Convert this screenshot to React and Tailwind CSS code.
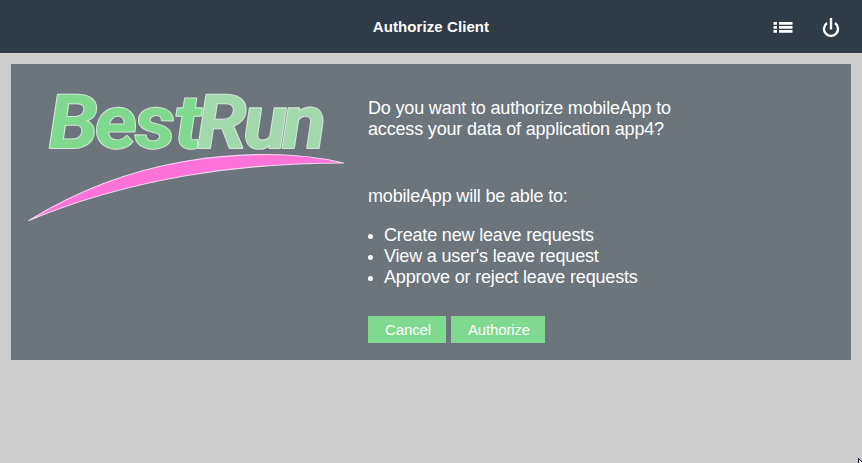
const permissions = [
  'Create new leave requests',
  "View a user's leave request",
  'Approve or reject leave requests',
];

function Logo() {
  return (
    <svg width="357" height="296" viewBox="11 64 357 296" className="shrink-0" role="img" aria-label="BestRun">
      <g
        className="font-['Roboto','Liberation_Sans',sans-serif] font-bold italic"
        fontSize="75"
        stroke="#d3e6d7"
        strokeWidth="2"
        strokeLinejoin="round"
        paintOrder="stroke"
        transform="translate(49 148) skewX(2) scale(1.08 1)"
      >
        <text x="0 43 80 117" y="0" fill="#7fd98e">Best</text>
        <text x="137.500 180.500 216.500" y="0" fill="#a1d8ac">Run</text>
      </g>
      <path
        d="M29 220.500C78 190 133 170 187 161C235 153 295 151 343.500 163C295 163 240 166.500 187 175.500C132 185 80 199 29 220.500Z"
        fill="#ff73d9"
        stroke="#f6d5ee"
        strokeWidth="1.2"
        strokeLinejoin="round"
      />
    </svg>
  );
}

function ListIcon() {
  return (
    <svg width="20" height="11" viewBox="0 0 20 11" fill="#fff">
      <path d="M.5 0h3.500v2.800H.5zM.5 4h3.500v2.800H.5zM.5 8h3.500v2.800H.5zM6 0h13.500v2.800H6zM6 4h13.500v2.800H6zM6 8h13.500v2.800H6z" />
    </svg>
  );
}

function PowerIcon() {
  return (
    <svg width="18" height="19" viewBox="0 0 18 19" fill="none" stroke="#fff" strokeWidth="2.400">
      <path d="M5 5.100A7 7 0 1 0 13 5.100" />
      <path d="M9 0V11.500" />
    </svg>
  );
}

export default function App() {
  return (
    <div className="h-[463px] w-[862px] relative overflow-hidden bg-[#cccccc] font-['Liberation_Sans',Arial,sans-serif] text-white">
      <header className="grid h-[53px] grid-cols-[1fr_auto_1fr] items-center bg-[#2f3b47]">
        <h1 className="col-start-2 text-[15px] font-bold leading-[18px] tracking-[0.08px]">Authorize Client</h1>
        <div className="flex items-center justify-end gap-[29px] pr-[22px] pt-[2px]">
          <button aria-label="Menu"><ListIcon /></button>
          <button aria-label="Log out"><PowerIcon /></button>
        </div>
      </header>
      <main className="mx-[11px] mt-[11px] flex h-[296px] bg-[#6c757c]">
        <Logo />
        <section className="pt-[34px] text-[18px] leading-[21px] tracking-[-0.17px]">
          <p className="w-[310px]">Do you want to authorize mobileApp to access your data of application app4?</p>
          <p className="mt-[46px]">mobileApp will be able to:</p>
          <ul className="mt-[18px]">
            {permissions.map((item) => (
              <li key={item} className="flex items-center gap-[11px]">
                <span className="mt-[2px] size-[5px] rounded-full bg-white" />
                {item}
              </li>
            ))}
          </ul>
          <div className="mt-[28px] flex gap-[5px] text-[15px] tracking-[-0.15px]">
            <button className="h-[27px] w-[78px] bg-[#7fd98e] pl-[2px]">Cancel</button>
            <button className="h-[27px] w-[94px] bg-[#7fd98e] pl-[2px]">Authorize</button>
          </div>
        </section>
      </main>
      <svg className="absolute bottom-0 right-0" width="4" height="5" viewBox="0 0 4 5" shapeRendering="crispEdges">
        <path d="M0 0h1v1h1v1h1v1h1v2H0z" fill="#15182b" />
        <path d="M1 2h1v1h1v1h1v1H1z" fill="#fff" />
      </svg>
    </div>
  );
}
